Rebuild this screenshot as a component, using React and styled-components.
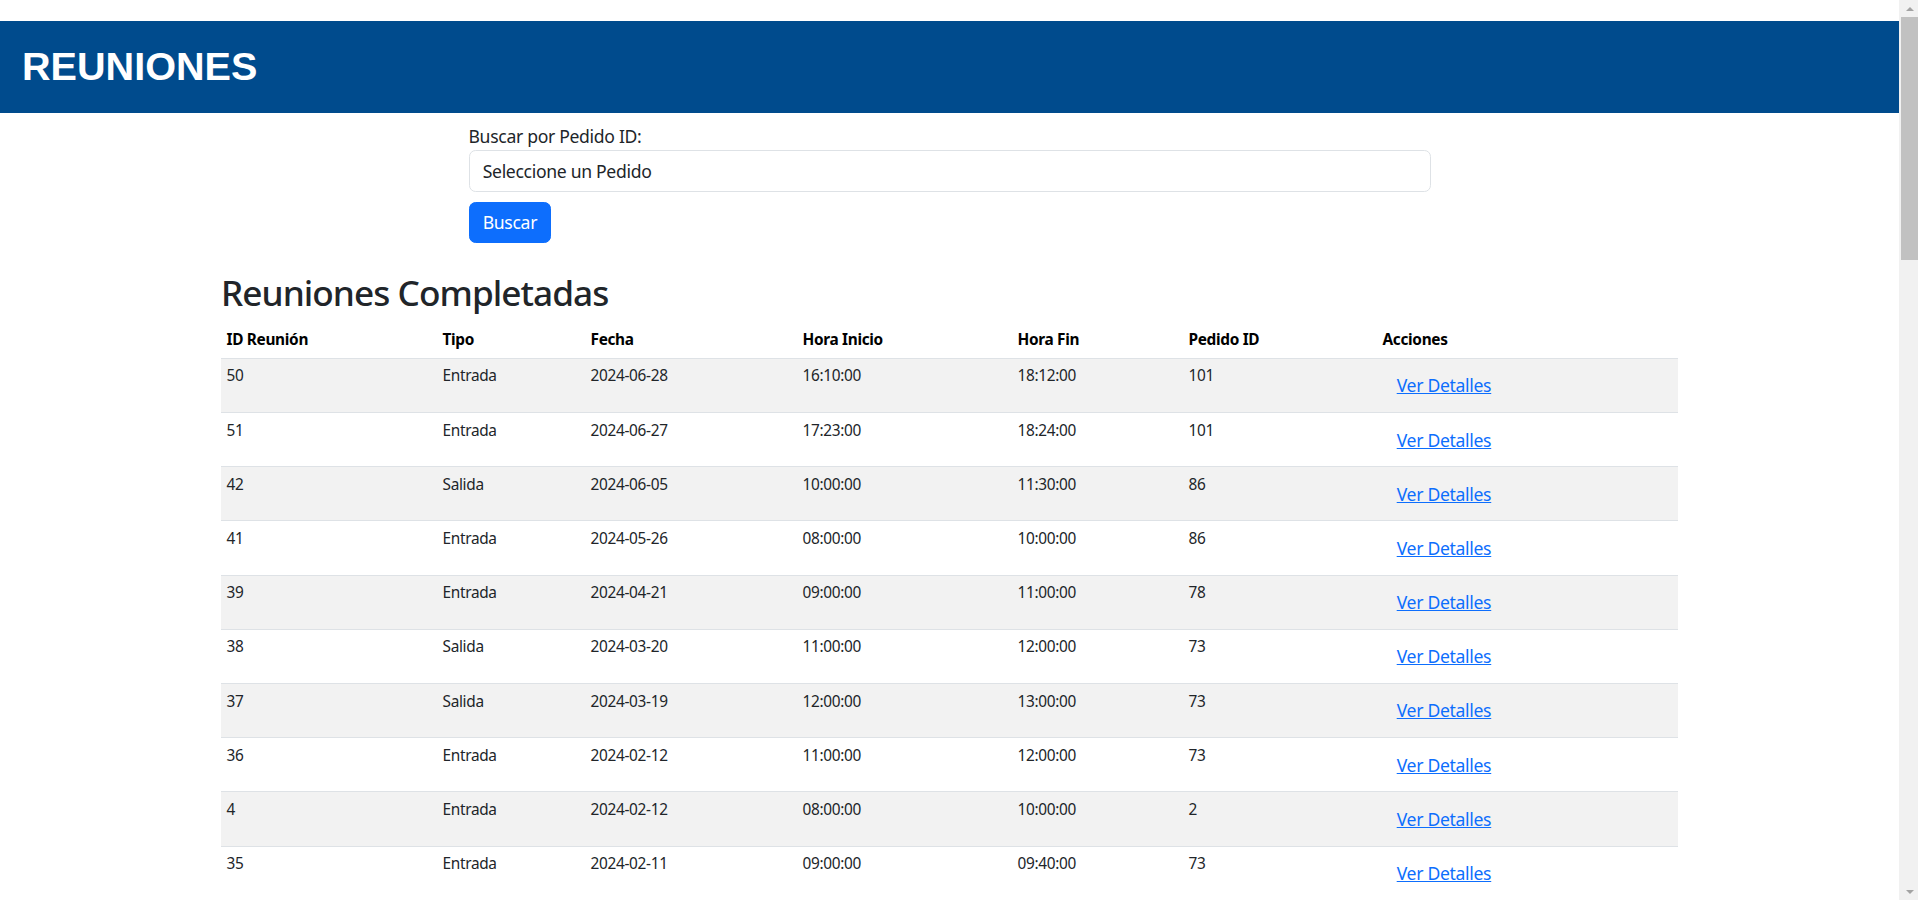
import styled, { createGlobalStyle } from "styled-components";

const GlobalStyle = createGlobalStyle`
  html, body {
    margin: 0;
    padding: 0;
  }

  body {
    background: #fff;
    color: #212529;
    font-family: "Segoe UI", "Noto Sans", "Open Sans", sans-serif;
    letter-spacing: -0.02em;
  }

  ::-webkit-scrollbar {
    display: none;
  }
`;

const firstRows = [
  [50, "Entrada", "2024-06-28", "16:10:00", "18:12:00", 101],
  [51, "Entrada", "2024-06-27", "17:23:00", "18:24:00", 101],
  [42, "Salida", "2024-06-05", "10:00:00", "11:30:00", 86],
  [41, "Entrada", "2024-05-26", "08:00:00", "10:00:00", 86],
  [39, "Entrada", "2024-04-21", "09:00:00", "11:00:00", 78],
  [38, "Salida", "2024-03-20", "11:00:00", "12:00:00", 73],
  [37, "Salida", "2024-03-19", "12:00:00", "13:00:00", 73],
  [36, "Entrada", "2024-02-12", "11:00:00", "12:00:00", 73],
  [4, "Entrada", "2024-02-12", "08:00:00", "10:00:00", 2],
  [35, "Entrada", "2024-02-11", "09:00:00", "09:40:00", 73],
];

// older meetings further down the list
const olderIds = [34, 33, 32, 31, 30, 29, 28, 27, 26, 25, 24, 23, 22, 21, 20, 19, 18, 17, 16, 15, 14, 13, 12, 11, 10, 9, 8, 7, 6, 5, 3, 2, 1, 49, 48, 47, 46, 45, 44, 43, 40];
const olderRows = olderIds.map((id, i) => {
  const month = String(Math.max(1, 12 - Math.floor(i / 4))).padStart(2, "0");
  const day = String(28 - (i % 4) * 6).padStart(2, "0");
  const start = 8 + (i % 5);
  return [
    id,
    i % 3 === 1 ? "Salida" : "Entrada",
    `2023-${month}-${day}`,
    `${String(start).padStart(2, "0")}:00:00`,
    `${String(start + 1).padStart(2, "0")}:30:00`,
    Math.max(1, 70 - i),
  ];
});

const rows = [...firstRows, ...olderRows];

const columns = [
  { label: "ID Reunión", width: 216 },
  { label: "Tipo", width: 148 },
  { label: "Fecha", width: 212 },
  { label: "Hora Inicio", width: 215 },
  { label: "Hora Fin", width: 171 },
  { label: "Pedido ID", width: 194 },
  { label: "Acciones", width: 301 },
];

export default function App() {
  return (
    <>
      <GlobalStyle />
      <Page>
        <TopBar>
          <h1>REUNIONES</h1>
        </TopBar>

        <SearchForm onSubmit={(e) => e.preventDefault()}>
          <label htmlFor="pedido">Buscar por Pedido ID:</label>
          <PedidoSelect id="pedido" defaultValue="">
            <option value="">Seleccione un Pedido</option>
            <option value="101">101</option>
            <option value="86">86</option>
            <option value="78">78</option>
            <option value="73">73</option>
          </PedidoSelect>
          <PrimaryButton type="submit">Buscar</PrimaryButton>
        </SearchForm>

        <TableSection>
          <h2>Reuniones Completadas</h2>
          <MeetingsTable>
            <colgroup>
              {columns.map((c) => (
                <col key={c.label} style={{ width: c.width }} />
              ))}
            </colgroup>
            <thead>
              <tr>
                {columns.map((c) => (
                  <th key={c.label}>{c.label}</th>
                ))}
              </tr>
            </thead>
            <tbody>
              {rows.map((r, i) => (
                <Row key={i} $striped={i % 2 === 0}>
                  <td>{r[0]}</td>
                  <td>{r[1]}</td>
                  <td>{r[2]}</td>
                  <td>{r[3]}</td>
                  <td>{r[4]}</td>
                  <td>{r[5]}</td>
                  <td>
                    <LinkButton type="button">Ver Detalles</LinkButton>
                  </td>
                </Row>
              ))}
            </tbody>
          </MeetingsTable>
        </TableSection>
      </Page>

      <Scrollbar aria-hidden="true">
        <ScrollArrow $dir="up" />
        <ScrollTrack>
          <ScrollThumb />
        </ScrollTrack>
        <ScrollArrow $dir="down" />
      </Scrollbar>
    </>
  );
}

const Page = styled.div`
  width: calc(100% - 19px);
`;

const TopBar = styled.header`
  margin-top: 21px;
  height: 92px;
  background: #004b8d;
  display: flex;
  align-items: center;
  padding-left: 22px;

  h1 {
    margin: 0;
    color: #fff;
    font-family: "Liberation Sans", Arial, sans-serif;
    font-weight: bold;
    font-size: 39.6px;
    line-height: 1;
    letter-spacing: 0;
  }
`;

const SearchForm = styled.form`
  width: 962px;
  margin: 10px auto 0;
  display: flex;
  flex-direction: column;
  align-items: flex-start;

  label {
    display: block;
    font-size: 17.6px;
    line-height: 26.4px;
    margin-bottom: 0.5px;
  }
`;

const PedidoSelect = styled.select`
  appearance: none;
  -webkit-appearance: none;
  box-sizing: border-box;
  width: 100%;
  height: 41.8px;
  padding: 0 13.2px;
  border: 1.1px solid #dee2e6;
  border-radius: 6.6px;
  background: #fff;
  color: #212529;
  font-family: inherit;
  font-size: 17.6px;
  line-height: 26.4px;
  letter-spacing: inherit;
`;

const PrimaryButton = styled.button`
  margin-top: 9.8px;
  box-sizing: border-box;
  height: 41.3px;
  padding: 0 13.2px;
  border: 1.1px solid #0d6efd;
  border-radius: 6.6px;
  background: #0d6efd;
  color: #fff;
  font-family: inherit;
  font-size: 17.6px;
  line-height: 26.4px;
  letter-spacing: inherit;
  cursor: pointer;
`;

const TableSection = styled.section`
  width: 1457px;
  margin: 0 auto;
  padding-bottom: 40px;

  h2 {
    margin: 28px 0 8.8px;
    font-size: 35.2px;
    font-weight: 500;
    line-height: 1.2;
    letter-spacing: -0.027em;
    color: #212529;
  }
`;

const MeetingsTable = styled.table`
  width: 100%;
  table-layout: fixed;
  border-collapse: collapse;
  font-size: 15.4px;
  line-height: 23.1px;
  color: #212529;

  th {
    text-align: left;
    font-weight: 700;
    padding: 6.5px 5.5px;
    border-bottom: 1px solid #dee2e6;
    color: #000;
  }

  td {
    vertical-align: top;
    padding: 5.5px;
  }
`;

const Row = styled.tr`
  background: ${(p) => (p.$striped ? "#f2f2f2" : "#fff")};
  border-bottom: 1px solid #dee2e6;
`;

const LinkButton = styled.button`
  box-sizing: border-box;
  height: 42.2px;
  padding: 0 13.2px;
  border: 1.1px solid transparent;
  background: transparent;
  color: #0d6efd;
  font-family: inherit;
  font-size: 17.6px;
  line-height: 26.4px;
  letter-spacing: inherit;
  text-decoration: underline;
  cursor: pointer;
`;

const Scrollbar = styled.div`
  position: fixed;
  top: 0;
  right: 0;
  width: 19px;
  height: 100vh;
  box-sizing: border-box;
  padding-left: 2px;
  background: #f1f1f1;
  display: flex;
  flex-direction: column;
`;

const ScrollArrow = styled.div`
  height: 17px;
  flex: none;
  display: flex;
  justify-content: center;
  align-items: center;

  &::before {
    content: "";
    width: 0;
    height: 0;
    border-left: 4.5px solid transparent;
    border-right: 4.5px solid transparent;
    ${(p) =>
      p.$dir === "up"
        ? "border-bottom: 4px solid #a3a3a3;"
        : "border-top: 4px solid #a3a3a3;"}
  }
`;

const ScrollTrack = styled.div`
  flex: 1;
`;

const ScrollThumb = styled.div`
  height: 243px;
  background: #c1c1c1;
`;
